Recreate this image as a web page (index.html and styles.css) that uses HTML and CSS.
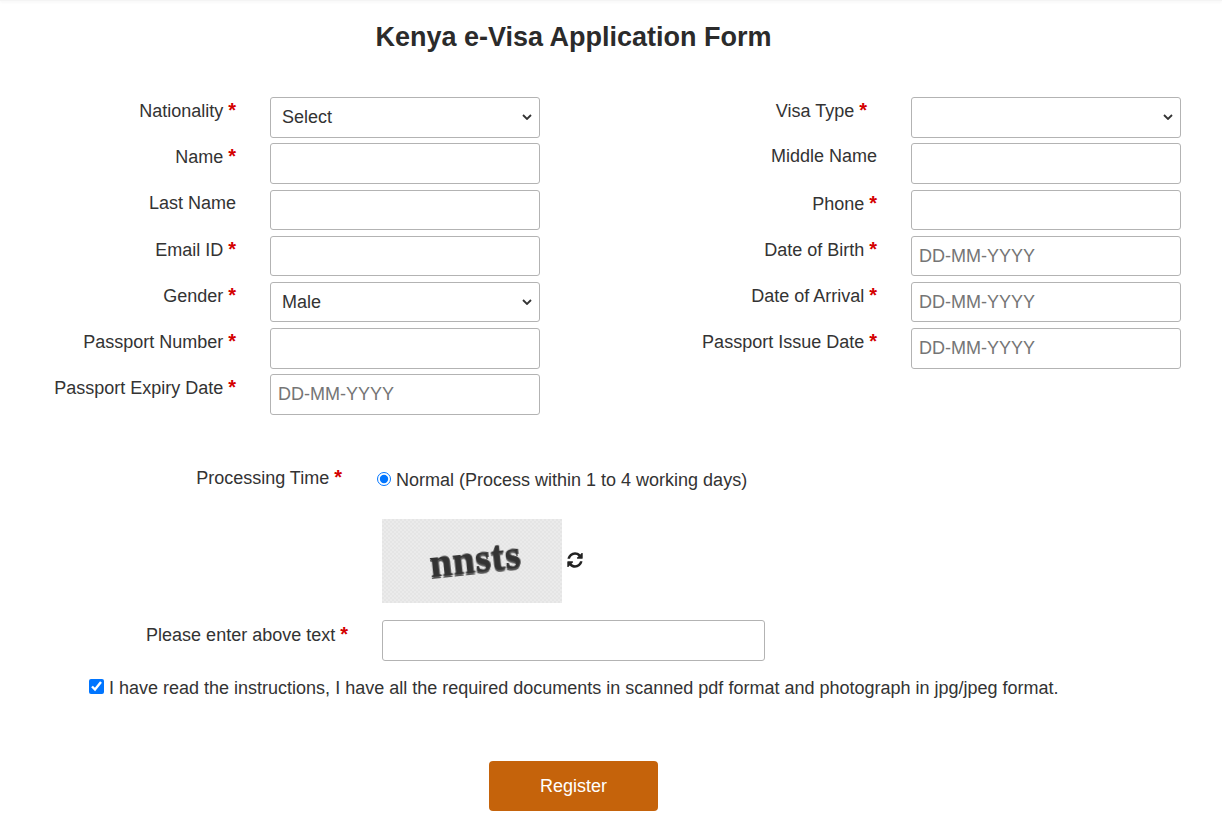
FILE: index.html
```html
<!DOCTYPE html>
<html lang="en">
<head>
    <meta charset="UTF-8">
    <meta name="viewport" content="width=device-width, initial-scale=1.0">
    <title>Kenya e-Visa Application Form</title>
    <link rel="stylesheet" href="styles.css">
</head>
<body>
    <div class="top-bar"></div>

    <h1 class="form-title">Kenya e-Visa Application Form</h1>

    <form class="visa-form" onsubmit="return false;">
        <div class="form-columns">
            <!-- Left column -->
            <div class="form-column">
                <div class="form-row">
                    <label class="field-label">Nationality <span class="req">*</span></label>
                    <select class="field"><option>Select</option></select>
                </div>
                <div class="form-row">
                    <label class="field-label">Name <span class="req">*</span></label>
                    <input class="field" type="text">
                </div>
                <div class="form-row">
                    <label class="field-label">Last Name</label>
                    <input class="field" type="text">
                </div>
                <div class="form-row">
                    <label class="field-label">Email ID <span class="req">*</span></label>
                    <input class="field" type="text">
                </div>
                <div class="form-row">
                    <label class="field-label">Gender <span class="req">*</span></label>
                    <select class="field"><option>Male</option><option>Female</option></select>
                </div>
                <div class="form-row">
                    <label class="field-label">Passport Number <span class="req">*</span></label>
                    <input class="field" type="text">
                </div>
                <div class="form-row">
                    <label class="field-label">Passport Expiry Date <span class="req">*</span></label>
                    <input class="field" type="text" placeholder="DD-MM-YYYY">
                </div>
            </div>

            <!-- Right column -->
            <div class="form-column">
                <div class="form-row">
                    <label class="field-label visa-type-label">Visa Type <span class="req">*</span></label>
                    <select class="field"><option></option></select>
                </div>
                <div class="form-row">
                    <label class="field-label">Middle Name</label>
                    <input class="field" type="text">
                </div>
                <div class="form-row">
                    <label class="field-label">Phone <span class="req">*</span></label>
                    <input class="field" type="text">
                </div>
                <div class="form-row">
                    <label class="field-label">Date of Birth <span class="req">*</span></label>
                    <input class="field" type="text" placeholder="DD-MM-YYYY">
                </div>
                <div class="form-row">
                    <label class="field-label">Date of Arrival <span class="req">*</span></label>
                    <input class="field" type="text" placeholder="DD-MM-YYYY">
                </div>
                <div class="form-row">
                    <label class="field-label">Passport Issue Date <span class="req">*</span></label>
                    <input class="field" type="text" placeholder="DD-MM-YYYY">
                </div>
            </div>
        </div>

        <div class="processing-row">
            <label class="wide-label">Processing Time <span class="req">*</span></label>
            <label class="radio-label"><input type="radio" name="processing" checked> Normal (Process within 1 to 4 working days)</label>
        </div>

        <div class="captcha-row">
            <div class="captcha-box"><span class="captcha-text">nnsts</span></div>
            <svg class="refresh-icon" viewBox="0 0 1792 1792" aria-hidden="true"><path d="M1639 1056q0 5-1 7-64 268-268 434.5t-478 166.5q-146 0-282.5-55t-243.5-157l-129 129q-19 19-45 19t-45-19-19-45v-448q0-26 19-45t45-19h448q26 0 45 19t19 45-19 45l-137 137q71 66 161 102t187 36q134 0 250-65t186-179q11-17 53-117 8-23 30-23h192q13 0 22.5 9.5t9.5 22.5zm25-800v448q0 26-19 45t-45 19h-448q-26 0-45-19t-19-45 19-45l138-138q-148-137-349-137-134 0-250 65t-186 179q-11 17-53 117-8 23-30 23h-199q-13 0-22.5-9.5t-9.5-22.5v-7q65-268 270-434.5t480-166.5q146 0 284 55.5t245 156.5l130-129q19-19 45-19t45 19 19 45z"/></svg>
        </div>

        <div class="captcha-input-row">
            <label class="wide-label">Please enter above text <span class="req">*</span></label>
            <input class="field captcha-input" type="text">
        </div>

        <label class="agree-row"><input type="checkbox" checked> I have read the instructions, I have all the required documents in scanned pdf format and photograph in jpg/jpeg format.</label>

        <div class="button-row">
            <button class="register-button" type="submit">Register</button>
        </div>
    </form>
</body>
</html>
```

FILE: styles.css
```css
/* Main Styles */
body {
    margin: 0;
    background-color: #fff;
    color: #333;
    font-family: "Liberation Sans", Arial, sans-serif;
    font-size: 18px;
    line-height: 1.5;
    overflow: hidden;
}
.top-bar {
    height: 1px;
    background-color: #f4f4f4;
    box-shadow: 0 1px 3px rgba(0, 0, 0, 0.08);
}
.form-title {
    margin: 19px 0 0;
    width: 1147px;
    text-align: center;
    font-size: 27px;
    font-weight: bold;
    line-height: 35px;
    color: #2b2b2b;
}
.visa-form {
    padding-top: 42.2px;
}
.form-columns {
    display: grid;
    grid-template-columns: 641px 1fr;
}
.form-column {
    display: flex;
    flex-direction: column;
    gap: 5.7px;
}
.form-row {
    display: flex;
    align-items: flex-start;
    gap: 34px;
}
.field-label {
    width: 236px;
    text-align: right;
    line-height: 26.6px;
    white-space: nowrap;
    flex-shrink: 0;
}
.visa-type-label {
    padding-right: 10px;
    box-sizing: border-box;
}
.req {
    color: #d40000;
    font-size: 20px;
    font-weight: bold;
}
.field {
    box-sizing: border-box;
    width: 270px;
    height: 40.5px;
    padding: 0 7px;
    background-color: #fff;
    border: 1px solid #b3b3b3;
    border-radius: 3px;
    color: #333;
    font-family: inherit;
    font-size: 18px;
}
select.field {
    appearance: none;
    padding-left: 11px;
    background-image: url("data:image/svg+xml,%3Csvg xmlns='http://www.w3.org/2000/svg' viewBox='0 0 10 6'%3E%3Cpath d='M1 1l4 4 4-4' fill='none' stroke='%23333' stroke-width='1.8'/%3E%3C/svg%3E");
    background-repeat: no-repeat;
    background-position: right 7px center;
    background-size: 10px 6px;
}
.field::placeholder {
    color: #757575;
}
.processing-row {
    display: flex;
    align-items: flex-start;
    margin-top: 50.2px;
}
.wide-label {
    width: 342px;
    text-align: right;
    line-height: 24px;
    flex-shrink: 0;
}
.radio-label {
    margin-left: 35px;
    line-height: 30px;
}
.radio-label input {
    margin: 0;
    width: 14px;
    height: 14px;
}
.captcha-row {
    display: flex;
    align-items: center;
    gap: 4px;
    margin: 24px 0 0 382px;
}
.captcha-box {
    width: 180px;
    height: 84px;
    display: flex;
    align-items: center;
    justify-content: center;
    overflow: hidden;
    background-color: #e8e8e8;
    background-image: repeating-conic-gradient(#e5e5e5 0 25%, #ebebeb 0 50%);
    background-size: 4px 4px;
}
.captcha-text {
    font-family: "Liberation Serif", serif;
    font-weight: bold;
    font-size: 40px;
    letter-spacing: 0.5px;
    line-height: 1;
    color: #333;
    text-shadow: 0 2px 0 #555, 1px 0 0 #444;
    transform: rotate(-6deg) scaleY(1.08);
    filter: blur(0.6px);
    margin: 0 0 6px 5px;
}
.refresh-icon {
    width: 18px;
    height: 18px;
    margin-bottom: 3px;
    fill: #222;
}
.captcha-input-row {
    display: flex;
    align-items: flex-start;
    margin-top: 17px;
}
.captcha-input-row .wide-label {
    width: 348px;
    line-height: 28px;
}
.wide-label + .captcha-input {
    width: 383px;
    margin-left: 34px;
}
.agree-row {
    display: block;
    margin: 13.5px 0 0 89px;
    line-height: 28px;
    white-space: nowrap;
}
.agree-row input {
    margin: 0;
    width: 15px;
    height: 15px;
}
.button-row {
    display: flex;
    justify-content: center;
    width: 1147px;
    margin-top: 59px;
}
.register-button {
    width: 169px;
    height: 50px;
    background-color: #c5630b;
    color: #fff;
    border: none;
    border-radius: 4px;
    font-family: inherit;
    font-size: 18px;
    cursor: pointer;
}
```
